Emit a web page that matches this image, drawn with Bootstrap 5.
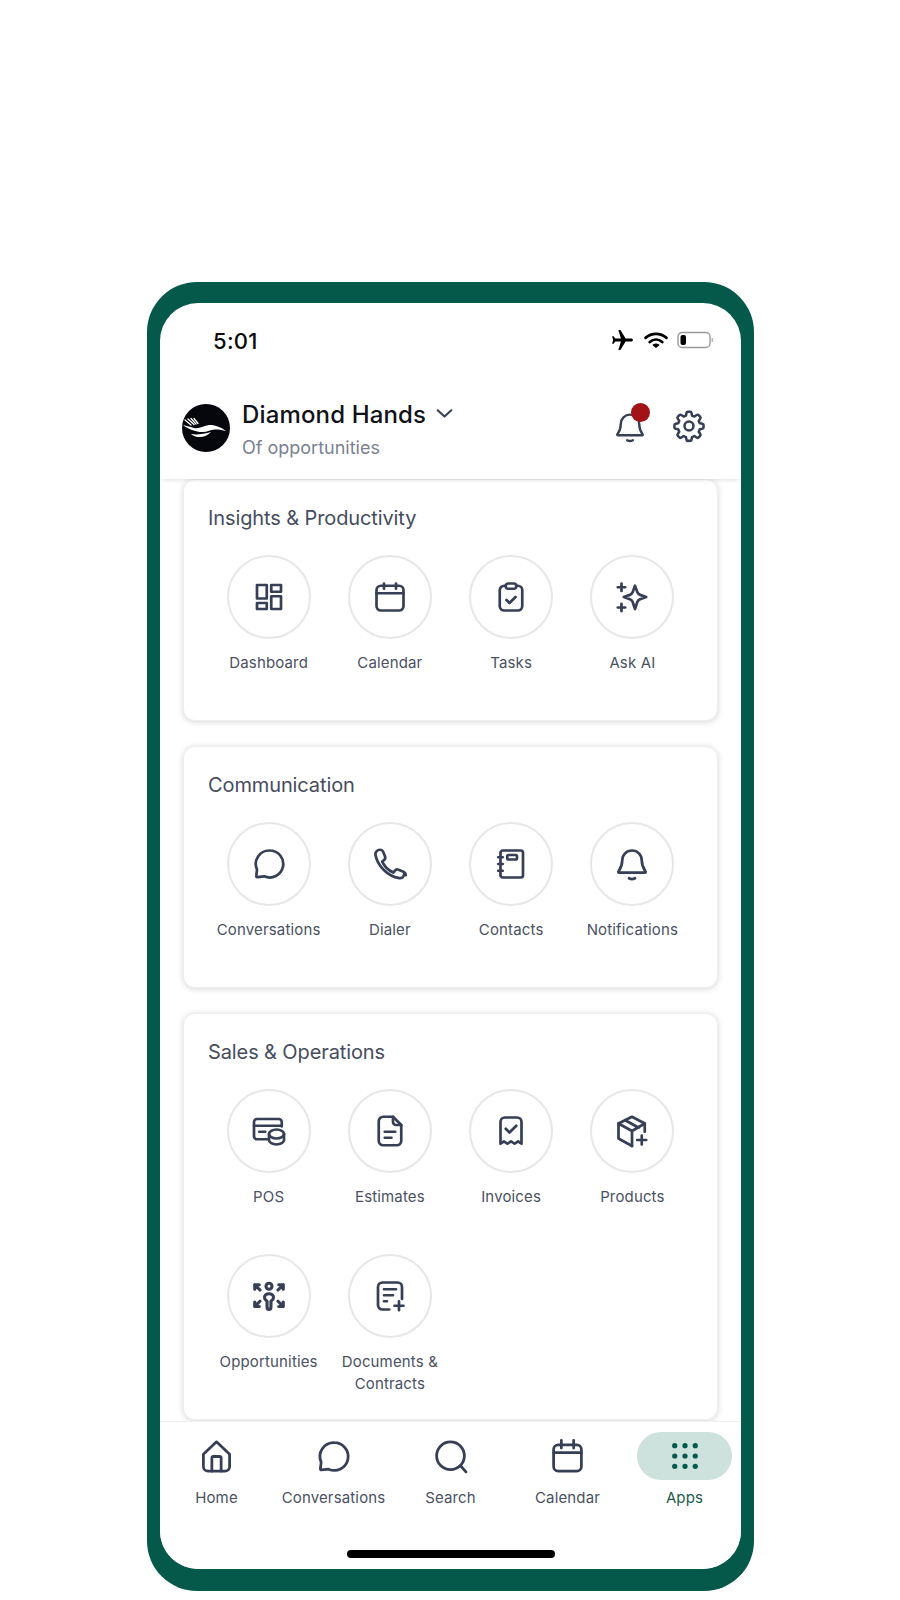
<!DOCTYPE html>
<html lang="en">
<head>
<meta charset="utf-8">
<title>Apps</title>
<meta name="viewport" content="width=device-width,initial-scale=1">
<link href="https://cdn.jsdelivr.net/npm/bootstrap@5.3.2/dist/css/bootstrap.min.css" rel="stylesheet">
<style>
  body { background:#fff; font-family:"Inter","Liberation Sans",sans-serif; padding:282px 146px 8px 147px; }
  .phone-frame { background:#04594b; border-radius:50px; padding:21px 13px 22px; }
  .phone-screen { background:#fff; border-radius:38px; height:1266px; overflow:hidden; }
  .status-row { height:74px; padding:0 27px 0 53px; flex:none; align-items:center; }
  .status-time { font-size:22px; font-weight:500; color:#0b0b0b; letter-spacing:.3px; line-height:1; margin-top:2px; }
  .app-head { height:102px; flex:none; padding:0 34px 0 22px; background:#fff; box-shadow:0 3px 4px -2px rgba(0,0,0,.12); position:relative; z-index:2; }
  .head-text { padding-top:3px; }
  .head-title { font-size:24px; font-weight:500; color:#101218; line-height:30px; letter-spacing:.15px; }
  .head-sub { font-size:18px; color:#7a8191; line-height:24px; margin-top:6px; }
  .head-dot { position:absolute; top:-5px; right:-3px; width:19px; height:19px; border-radius:50%; background:#a31216; }
  .scroll-area { flex:1 1 0; min-height:0; overflow:hidden; padding:0 23px; }
  .app-card { border:1px solid #eceef0; border-radius:12px; box-shadow:0 1px 6px rgba(0,0,0,.16); margin-bottom:25px; }
  .app-card .card-body { padding:25px 24px 0; }
  .card-head { font-size:20px; line-height:26px; color:#454c5d; margin-bottom:24px; font-weight:400; letter-spacing:-.11px; }
  .tile { min-height:141px; margin-bottom:24px; }
  .tile-ring { width:84px; height:84px; border:2px solid #e6e7e9; border-radius:50%; margin:0 auto 13px; }
  .tile-text { font-size:15px; line-height:22px; color:#4a5162; letter-spacing:.15px; white-space:nowrap; }
  .ico { fill:none; stroke:#363f55; stroke-width:1.8; stroke-linecap:round; stroke-linejoin:round; }
  .tab-strip { height:148px; flex:none; margin:0 -2px; background:#fff; border-top:1px solid #eef0f1; position:relative; z-index:2; }
  .tab-slot { width:20%; padding-top:10px; }
  .tab-pill { width:95px; height:48px; border-radius:24px; margin:0 auto; }
  .tab-pill-on { background:#cde2dc; }
  .tab-text { font-size:15px; line-height:22px; color:#4a5162; margin-top:7px; letter-spacing:.15px; white-space:nowrap; }
  .tab-text-on { color:#1e5a4e; }
  .home-bar { position:absolute; left:189px; bottom:11px; width:208px; height:8px; border-radius:4px; background:#000; }
</style>
</head>
<body>

<div class="phone-frame">
<div class="phone-screen d-flex flex-column">

  <!-- status bar -->
  <div class="status-row d-flex justify-content-between">
    <span class="status-time">5:01</span>
    <div class="d-flex align-items-center gap-2">
      <svg width="25" height="25" viewBox="0 0 24 24"><path fill="#000" transform="rotate(90 12 12)" d="M21 16v-2l-8-5V3.500c0-.83-.67-1.500-1.500-1.500S10 2.670 10 3.500V9l-8 5v2l8-2.500V19l-2 1.500V22l3.500-1 3.500 1v-1.500L13 19v-5.500l8 2.500z"/></svg>
      <svg width="26" height="21" viewBox="0 0 24 20" fill="none" stroke="#000" stroke-width="2.600" stroke-linecap="round"><path d="M2 7.500c5.800-5 14.200-5 20 0"/><path d="M6 11.500c3.600-3 8.400-3 12 0"/><path d="M12 16.500l-2.600-2.200c1.500-1 3.700-1 5.200 0z" fill="#000" stroke-width="1"/></svg>
      <svg width="37" height="18" viewBox="0 0 37 18"><rect x="1" y="1.500" width="32" height="15" rx="4" fill="#fff" stroke="#9a9a9a" stroke-width="1.400"/><rect x="3.500" y="4" width="5.500" height="10" rx="2" fill="#000"/><rect x="34.500" y="7" width="1.600" height="4" rx=".8" fill="#b5b5b5"/></svg>
    </div>
  </div>

  <!-- header -->
  <div class="app-head d-flex align-items-center justify-content-between">
    <div class="d-flex align-items-center gap-2">
      <svg class="me-1" width="48" height="48" viewBox="0 0 48 48">
        <circle cx="24" cy="24" r="24" fill="#05070d"/>
        <path fill="#fff" d="M1 21c4 .6 8 2.400 11 3 6 1 10-2.500 15-3 5-.5 12 2 17 6-5-1.500-9-2-13-1.300-3 .6-6 2-10 2.300-6 .4-15-3-20-7z"/>
        <path fill="#fff" d="M9 30c6 1 13 0 20-2-3 3.500-8 5.500-13 5-2.500-.3-5-1.300-7-3z"/>
        <path stroke="#fff" stroke-width="1.300" stroke-linecap="round" d="M3 16l6 5M6 15l6 5.500M9 14.500l5 5.500M12 14.500l4 5"/>
      </svg>
      <div class="head-text">
        <div class="head-title d-flex align-items-center">Diamond Hands
          <svg class="ms-2" width="21" height="21" viewBox="0 0 20 20" fill="none" stroke="#363f55" stroke-width="2" stroke-linecap="round" stroke-linejoin="round"><path d="M3.500 6l6.500 6 6.500-6"/></svg>
        </div>
        <div class="head-sub">Of opportunities</div>
      </div>
    </div>
    <div class="d-flex align-items-center pb-1" style="gap:24px">
      <div class="position-relative" style="width:34px;height:36px">
        <svg class="ico" width="34" height="36" viewBox="0 0 24 25" style="stroke-width:1.700"><path d="M5.500 11a6.500 6.500 0 0 1 13 0c0 4 1.500 6 2.500 7.500a.4.4 0 0 1-.4.5H3.400a.4.4 0 0 1-.4-.5C4 17 5.500 15 5.500 11z"/><path d="M10 22.500q2 1.200 4 0"/></svg>
        <span class="head-dot"></span>
      </div>
      <svg class="ico" width="36" height="36" viewBox="0 0 24 24" style="stroke-width:1.700"><circle cx="12" cy="12" r="3"/><path d="M10.300 3.300a1 1 0 0 1 1-.8h1.400a1 1 0 0 1 1 .8l.3 1.700 1.600.7 1.500-1a1 1 0 0 1 1.300.1l1 1a1 1 0 0 1 .1 1.300l-1 1.500.7 1.600 1.700.3a1 1 0 0 1 .8 1v1.400a1 1 0 0 1-.8 1l-1.700.3-.7 1.600 1 1.500a1 1 0 0 1-.1 1.300l-1 1a1 1 0 0 1-1.300.1l-1.500-1-1.600.7-.3 1.700a1 1 0 0 1-1 .8h-1.400a1 1 0 0 1-1-.8l-.3-1.700-1.600-.7-1.500 1a1 1 0 0 1-1.300-.1l-1-1a1 1 0 0 1-.1-1.300l1-1.500-.7-1.600-1.700-.3a1 1 0 0 1-.8-1v-1.400a1 1 0 0 1 .8-1l1.700-.3.7-1.600-1-1.500a1 1 0 0 1 .1-1.300l1-1a1 1 0 0 1 1.300-.1l1.500 1 1.600-.7z"/></svg>
    </div>
  </div>

  <!-- cards -->
  <div class="scroll-area">

    <div class="card app-card">
      <div class="card-body">
        <div class="card-head">Insights &amp; Productivity</div>
        <div class="row row-cols-4 g-0 text-center">
          <div class="col tile">
            <div class="tile-ring d-flex align-items-center justify-content-center"><svg class="ico" width="36" height="36" viewBox="0 0 24 24"><rect x="4" y="4" width="6.500" height="9"/><rect x="13.500" y="4" width="6.500" height="4.500"/><rect x="4" y="16" width="6.500" height="4"/><rect x="13.500" y="11.500" width="6.500" height="8.500"/></svg></div>
            <div class="tile-text">Dashboard</div>
          </div>
          <div class="col tile">
            <div class="tile-ring d-flex align-items-center justify-content-center"><svg class="ico" width="36" height="36" viewBox="0 0 24 24"><rect x="3" y="4.500" width="18" height="16.500" rx="3"/><path d="M3 9.500h18M8 3v3.500M16 3v3.500"/></svg></div>
            <div class="tile-text">Calendar</div>
          </div>
          <div class="col tile">
            <div class="tile-ring d-flex align-items-center justify-content-center"><svg class="ico" width="36" height="36" viewBox="0 0 24 24"><path d="M8.500 4.500H7.500a3 3 0 0 0-3 3v10.500a3 3 0 0 0 3 3h9a3 3 0 0 0 3-3V7.500a3 3 0 0 0-3-3h-1"/><rect x="8.500" y="3" width="7" height="3.500" rx="1.500"/><path d="M9 14l2 2 4-4"/></svg></div>
            <div class="tile-text">Tasks</div>
          </div>
          <div class="col tile">
            <div class="tile-ring d-flex align-items-center justify-content-center"><svg class="ico" width="36" height="36" viewBox="0 0 24 24"><path d="M14 4.500l1.600 4.400a3 3 0 0 0 1.800 1.700l4.100 1.400-4.100 1.500a3 3 0 0 0-1.800 1.700L14 20l-1.600-4.800a3 3 0 0 0-1.800-1.700l-4.100-1.500 4.100-1.400a3 3 0 0 0 1.800-1.700z"/><path d="M5 3v5M2.500 5.500h5M5 16.500v5M2.500 19h5"/></svg></div>
            <div class="tile-text">Ask AI</div>
          </div>
        </div>
      </div>
    </div>

    <div class="card app-card">
      <div class="card-body">
        <div class="card-head">Communication</div>
        <div class="row row-cols-4 g-0 text-center">
          <div class="col tile">
            <div class="tile-ring d-flex align-items-center justify-content-center"><svg class="ico" width="36" height="36" viewBox="0 0 24 24"><path d="M12.500 3a9 9 0 1 1-3.700 17.200l-4.600.5a.6.6 0 0 1-.7-.7l.5-4.300A9 9 0 0 1 12.500 3z"/></svg></div>
            <div class="tile-text">Conversations</div>
          </div>
          <div class="col tile">
            <div class="tile-ring d-flex align-items-center justify-content-center"><svg class="ico" width="36" height="36" viewBox="0 0 24 24"><path d="M21.500 18.500c0 1.900-1.600 3.200-3.400 2.900-7.500-1.200-14.500-8-15.800-15.500C2 4.100 3.500 2.500 5.300 2.500c1 0 1.800.6 2.200 1.500l1.200 3c.3.800.1 1.700-.6 2.300l-1.300 1.100a15 15 0 0 0 7.400 7.300l1.100-1.300c.6-.7 1.500-.9 2.300-.6l3 1.200c.9.400 1.900 1.300 1.900 2.500z"/></svg></div>
            <div class="tile-text">Dialer</div>
          </div>
          <div class="col tile">
            <div class="tile-ring d-flex align-items-center justify-content-center"><svg class="ico" width="36" height="36" viewBox="0 0 24 24"><rect x="5" y="3" width="15" height="18" rx="1.500"/><path d="M3.500 7.500h3M3.500 12h3M3.500 16.500h3"/><rect x="9.500" y="6" width="6.500" height="3" rx="1"/></svg></div>
            <div class="tile-text">Contacts</div>
          </div>
          <div class="col tile">
            <div class="tile-ring d-flex align-items-center justify-content-center"><svg class="ico" width="36" height="36" viewBox="0 0 24 24"><path d="M5.500 9.500a6.500 6.500 0 0 1 13 0c0 4 1.500 6 2.500 7.500a.5.5 0 0 1-.4.8H3.400a.5.5 0 0 1-.4-.8C4 15.500 5.500 13.500 5.500 9.500z"/><path d="M10 21.500q2 1.200 4 0"/></svg></div>
            <div class="tile-text">Notifications</div>
          </div>
        </div>
      </div>
    </div>

    <div class="card app-card">
      <div class="card-body">
        <div class="card-head">Sales &amp; Operations</div>
        <div class="row row-cols-4 g-0 text-center">
          <div class="col tile">
            <div class="tile-ring d-flex align-items-center justify-content-center"><svg class="ico" width="36" height="36" viewBox="0 0 24 24"><path d="M20.500 9V6a2 2 0 0 0-2-2H4a2 2 0 0 0-2 2v9.500a2 2 0 0 0 2 2h7"/><path d="M2 8.500h18.500M5.500 12.500h4"/><ellipse cx="17" cy="14" rx="5" ry="3"/><path d="M12 14v4c0 1.700 2.200 3 5 3s5-1.300 5-3v-4"/></svg></div>
            <div class="tile-text">POS</div>
          </div>
          <div class="col tile">
            <div class="tile-ring d-flex align-items-center justify-content-center"><svg class="ico" width="36" height="36" viewBox="0 0 24 24"><path d="M14 2.500H7.500a3 3 0 0 0-3 3v13a3 3 0 0 0 3 3h9a3 3 0 0 0 3-3V8z"/><path d="M14 2.500V6a2 2 0 0 0 2 2h3.500M8.500 12.500h7M8.500 16.500h4.500"/></svg></div>
            <div class="tile-text">Estimates</div>
          </div>
          <div class="col tile">
            <div class="tile-ring d-flex align-items-center justify-content-center"><svg class="ico" width="36" height="36" viewBox="0 0 24 24"><path d="M5 20.500V6a3 3 0 0 1 3-3h8a3 3 0 0 1 3 3v14.500l-2.300-1.600-2.300 1.600-2.400-1.600-2.400 1.600-2.300-1.600z"/><path d="M8.500 10.500l2.500 2.500 4.500-4.500"/></svg></div>
            <div class="tile-text">Invoices</div>
          </div>
          <div class="col tile">
            <div class="tile-ring d-flex align-items-center justify-content-center"><svg class="ico" width="36" height="36" viewBox="0 0 24 24"><path d="M20.500 12.500V7L12 2.500 3 7v10l9 5"/><path d="M3 7l9 5 8.500-5M12 12v10M7.500 4.800l9 5"/><path d="M18.500 15v6M15.500 18h6"/></svg></div>
            <div class="tile-text">Products</div>
          </div>
          <div class="col tile">
            <div class="tile-ring d-flex align-items-center justify-content-center"><svg class="ico" width="36" height="36" viewBox="0 0 24 24" style="stroke-width:2.100"><circle cx="12" cy="5.500" r="2"/><path d="M12 21c-1 0-1.300-.8-1.300-2v-3.500c-1-.7-1.700-1.500-1.700-2.500 0-1.500 1.300-2.500 3-2.500s3 1 3 2.500c0 1-.7 1.800-1.700 2.500V19c0 1.200-.3 2-1.300 2z"/><path d="M2.500 4.500l3.500 3.500M2.500 7.500v-3h3M21.500 4.500L18 8M21.500 7.500v-3h-3M2.500 19L6 15.500M2.500 16v3h3M21.500 19L18 15.500M21.500 16v3h-3"/></svg></div>
            <div class="tile-text">Opportunities</div>
          </div>
          <div class="col tile">
            <div class="tile-ring d-flex align-items-center justify-content-center"><svg class="ico" width="36" height="36" viewBox="0 0 24 24"><path d="M11.500 21H7a3 3 0 0 1-3-3V6a3 3 0 0 1 3-3h10a3 3 0 0 1 3 3v8"/><path d="M8 7.500h8M8 11.500h6M8 15.500h2M18 15.500v6M15 18.500h6"/></svg></div>
            <div class="tile-text">Documents &amp;<br>Contracts</div>
          </div>
        </div>
      </div>
    </div>

  </div>

  <!-- bottom tabs -->
  <div class="tab-strip d-flex text-center">
    <div class="tab-slot">
      <div class="tab-pill d-flex align-items-center justify-content-center"><svg class="ico" width="37" height="37" viewBox="0 0 24 24"><path d="M3.500 10.500L12 2.500l8.500 8v8a3 3 0 0 1-3 3h-11a3 3 0 0 1-3-3z"/><path d="M9 21.500V13a1 1 0 0 1 1-1h4a1 1 0 0 1 1 1v8.500"/></svg></div>
      <div class="tab-text">Home</div>
    </div>
    <div class="tab-slot">
      <div class="tab-pill d-flex align-items-center justify-content-center"><svg class="ico" width="37" height="37" viewBox="0 0 24 24"><path d="M12.500 3a9 9 0 1 1-3.700 17.200l-4.600.5a.6.6 0 0 1-.7-.7l.5-4.300A9 9 0 0 1 12.500 3z"/></svg></div>
      <div class="tab-text">Conversations</div>
    </div>
    <div class="tab-slot">
      <div class="tab-pill d-flex align-items-center justify-content-center"><svg class="ico" width="37" height="37" viewBox="0 0 24 24"><circle cx="12" cy="11.500" r="9"/><path d="M18.500 18l3.500 4"/></svg></div>
      <div class="tab-text">Search</div>
    </div>
    <div class="tab-slot">
      <div class="tab-pill d-flex align-items-center justify-content-center"><svg class="ico" width="37" height="37" viewBox="0 0 24 24"><rect x="3" y="4.500" width="18" height="17" rx="3"/><path d="M3 9.500h18M8 1.500v5M16 1.500v5"/></svg></div>
      <div class="tab-text">Calendar</div>
    </div>
    <div class="tab-slot">
      <div class="tab-pill tab-pill-on d-flex align-items-center justify-content-center"><svg width="28" height="28" viewBox="0 0 30 30" fill="#04594b"><circle cx="4" cy="4" r="2.800"/><circle cx="15" cy="4" r="2.800"/><circle cx="26" cy="4" r="2.800"/><circle cx="4" cy="15" r="2.800"/><circle cx="15" cy="15" r="2.800"/><circle cx="26" cy="15" r="2.800"/><circle cx="4" cy="26" r="2.800"/><circle cx="15" cy="26" r="2.800"/><circle cx="26" cy="26" r="2.800"/></svg></div>
      <div class="tab-text tab-text-on">Apps</div>
    </div>
    <span class="home-bar"></span>
  </div>

</div>
</div>

<script src="https://cdn.jsdelivr.net/npm/bootstrap@5.3.2/dist/js/bootstrap.bundle.min.js"></script>
</body>
</html>
